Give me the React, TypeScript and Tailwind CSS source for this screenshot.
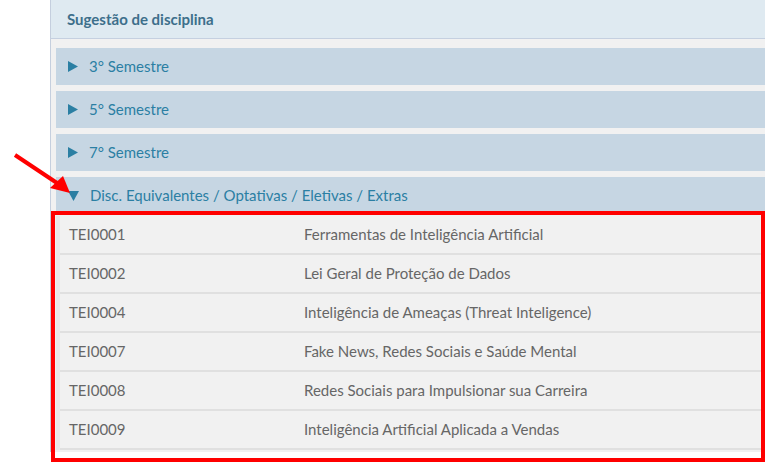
import React from 'react';

// ============================================================================
// Data
// ============================================================================

const semesters = ['3° Semestre', '5° Semestre', '7° Semestre'];

const disciplinas = [
  { code: 'TEI0001', name: 'Ferramentas de Inteligência Artificial' },
  { code: 'TEI0002', name: 'Lei Geral de Proteção de Dados' },
  { code: 'TEI0004', name: 'Inteligência de Ameaças (Threat Inteligence)' },
  { code: 'TEI0007', name: 'Fake News, Redes Sociais e Saúde Mental' },
  { code: 'TEI0008', name: 'Redes Sociais para Impulsionar sua Carreira' },
  { code: 'TEI0009', name: 'Inteligência Artificial Aplicada a Vendas' },
];

// ============================================================================
// Components
// ============================================================================

function Caret({ open }: { open?: boolean }) {
  return open ? (
    <svg width="11" height="10" viewBox="0 0 11 10" className="shrink-0">
      <polygon points="0,0 11,0 5.5,10" fill="#2b7fa3" />
    </svg>
  ) : (
    <svg width="10" height="11" viewBox="0 0 10 11" className="shrink-0">
      <polygon points="0,0 10,5.5 0,11" fill="#2b7fa3" />
    </svg>
  );
}

function AccordionHeader({ label, open }: { label: string; open?: boolean }) {
  return (
    <div className="h-[37px] bg-[#c6d6e3] flex items-center pl-[12px] gap-[11px] text-[15px] text-[#2b7fa3]">
      <Caret open={open} />
      <span>{label}</span>
    </div>
  );
}

export default function App() {
  return (
    <div className="relative w-[768px] h-[468px] bg-white overflow-hidden font-['Lato',sans-serif]">
      {/* Panel */}
      <div className="ml-[50px] w-[715px] h-[452px] border-l border-[#c5cfde] bg-[#f1f1f1] flex flex-col">
        <div className="h-[39px] shrink-0 bg-[#dfeaf1] border-b border-[#c5d0e0] flex items-center pl-[16px] text-[15px] font-bold text-[#3d6f8b]">
          Sugestão de disciplina
        </div>

        <div className="pl-[5px] pt-[9px] flex flex-col gap-[6px]">
          {semesters.map((s) => (
            <AccordionHeader key={s} label={s} />
          ))}
          <div className="flex flex-col">
            <AccordionHeader label="Disc. Equivalentes / Optativas / Eletivas / Extras" open />
            <div className="mt-[2px] pl-[4px] bg-[#e9e9e9]">
              {disciplinas.map((d) => (
                <div
                  key={d.code}
                  className="h-[39px] bg-[#f1f1f1] border-b-2 border-[#e0e0e0] flex items-center text-[15px] text-[#666666]"
                >
                  <span className="w-[244px] pl-[9px]">{d.code}</span>
                  <span>{d.name}</span>
                </div>
              ))}
            </div>
          </div>
        </div>
      </div>

      {/* Annotation: red box */}
      <div className="absolute left-[51px] top-[211px] w-[714px] h-[251px] border-4 border-[#ff0000]" />

      {/* Annotation: red arrow */}
      <svg className="absolute left-0 top-0" width="100" height="210" viewBox="0 0 100 210">
        <line x1="15" y1="155" x2="60" y2="185" stroke="#ff0000" strokeWidth="4" />
        <polygon points="70,193 50,188 63,176" fill="#ff0000" />
      </svg>
    </div>
  );
}
